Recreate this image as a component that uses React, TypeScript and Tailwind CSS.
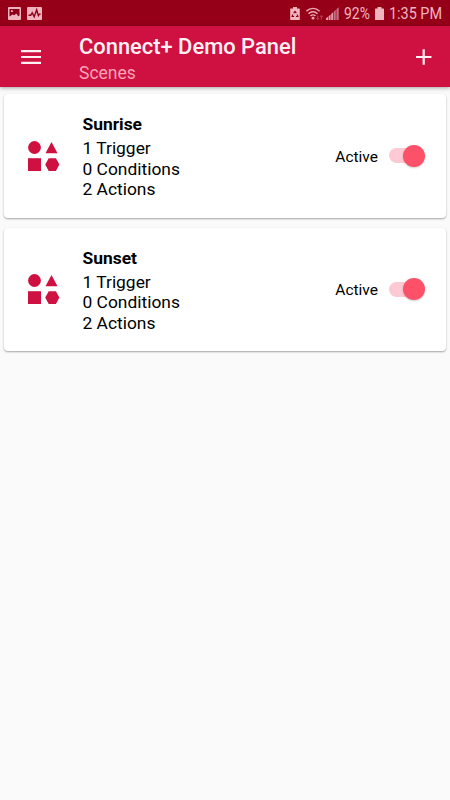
import React, { useState } from 'react';

interface Scene {
  name: string;
  triggers: string;
  conditions: string;
  actions: string;
}

const SCENES: Scene[] = [
  { name: 'Sunrise', triggers: '1 Trigger', conditions: '0 Conditions', actions: '2 Actions' },
  { name: 'Sunset', triggers: '1 Trigger', conditions: '0 Conditions', actions: '2 Actions' },
];

const PictureIcon = () => (
  <svg className="w-[13px] h-[13px]" viewBox="0 0 13 13">
    <rect width="13" height="13" rx="1" fill="#f0b4bf" />
    <path d="M1.5 2h10v6.600l-1.300.6-1.800-2.600-2.200 1.600-1.600-.8-3.100 2z" fill="#8d0018" />
    <path d="M3 3.300h1.800V5H3z" fill="#f0b4bf" />
  </svg>
);

const ActivityIcon = () => (
  <svg className="w-[15px] h-[13px]" viewBox="0 0 15 13">
    <rect width="15" height="13" rx="1" fill="#f0b4bf" />
    <path d="M1.500 8.300h2.200l1.500-2.500 2 4 2.500-7 1.700 5.800 1-1.500h1.300" fill="none" stroke="#8d0018" strokeWidth="1.400" />
  </svg>
);

const SaverIcon = () => (
  <svg className="w-[10px] h-[13px]" viewBox="0 0 10 13">
    <path d="M3 0h4v1.500h2.200a.6.6 0 0 1 .6.6v10.300a.6.6 0 0 1-.6.6H.8a.6.6 0 0 1-.6-.6V2.100a.6.6 0 0 1 .6-.6H3z" fill="#f0b4bf" />
    <path d="M3.700 6.200 5 4.400l1.300 1.800M7.200 7.600l.7 1.900H6M4.200 9.500H2.100l.8-1.900" fill="none" stroke="#8d0018" strokeWidth="1.200" />
  </svg>
);

const WifiIcon = () => (
  <svg className="w-[18px] h-[14px]" viewBox="0 0 18 14">
    <g fill="none" stroke="#eba9b6" strokeWidth="1.400">
      <path d="M.4 4.200a9.200 9.200 0 0 1 13.200 0" />
      <path d="M2.500 6.700a6.200 6.200 0 0 1 9 0" />
      <path d="M4.500 9a3.400 3.400 0 0 1 5 0" />
    </g>
    <circle cx="7" cy="11.200" r="1.400" fill="#eba9b6" />
    <path d="M11.800 8.500v4M10.300 11l1.500 1.500 1.500-1.500M15.300 12.500v-4M13.800 10l1.500-1.500 1.500 1.500" fill="none" stroke="#b54257" strokeWidth="1" />
  </svg>
);

const SignalIcon = () => (
  <svg className="w-[13px] h-[13px]" viewBox="0 0 13 13">
    <path d="M0 11.200l2-1.400V13H0zM2.600 9.200l2-1.700V13h-2zM5.200 6.900l2-1.700V13h-2z" fill="#e59dab" />
    <path d="M7.800 4.600l2-1.700V13h-2zM10.400 2.300l2.300-2V13h-2.300z" fill="#c66c80" />
  </svg>
);

const BatteryIcon = () => (
  <svg className="w-[9px] h-[13px]" viewBox="0 0 9 13">
    <path d="M2.500 0h4v1.500H8.400a.6.6 0 0 1 .6.6v10.300a.6.6 0 0 1-.6.6H.6a.6.6 0 0 1-.6-.6V2.100a.6.6 0 0 1 .6-.6h1.900z" fill="#f0b4bf" />
  </svg>
);

const ShapesIcon = () => (
  <svg className="w-8 h-[30px]" viewBox="0 0 32 30" fill="#ce1141">
    <circle cx="6.500" cy="6.500" r="6.400" />
    <path d="M23.500 1l6 11.200h-12z" />
    <path d="M0 17.200h13V30H0z" />
    <path d="M20.700 17.200h7.200l3.500 6.400-3.500 6.400h-7.200l-3.500-6.400z" />
  </svg>
);

const StatusBar = () => (
  <div className="flex h-[26px] items-center bg-[#950018] pl-2 pr-[9px] pt-px text-[#f0b4bf]">
    <PictureIcon />
    <div className="w-1.5" />
    <ActivityIcon />
    <div className="ml-auto flex items-center">
      <SaverIcon />
      <div className="w-1.5" />
      <WifiIcon />
      <div className="w-0.5" />
      <SignalIcon />
      <span className="ml-[5px] w-[26px] origin-left scale-x-[0.87] whitespace-nowrap text-[16px]">92%</span>
      <div className="w-[5px]" />
      <BatteryIcon />
      <span className="ml-[5px] w-[52px] origin-left scale-x-[0.9] whitespace-nowrap text-[16px]">1:35 PM</span>
    </div>
  </div>
);

const Header = () => (
  <header className="relative flex h-[61px] items-center bg-[#ce1141] pl-[21px] pr-[18px] shadow-[0_1px_4px_rgba(0,0,0,0.35)]">
    <button aria-label="Menu">
      <svg className="w-5 h-[14px]" viewBox="0 0 20 14" fill="#fff0f4">
        <path d="M0 0h20v2.200H0zM0 5.900h20v2.200H0zM0 11.800h20V14H0z" />
      </svg>
    </button>
    <div className="ml-[38px] flex-1 pt-[5px]">
      <h1 className="text-[21.900px] font-medium leading-[28px] text-[#fff0f4]">Connect+ Demo Panel</h1>
      <p className="text-[17.500px] leading-[25px] text-[#f7a3b8]">Scenes</p>
    </div>
    <button aria-label="Add scene">
      <svg className="w-4 h-4" viewBox="0 0 16 16" fill="#fff0f4">
        <path d="M6.600.300h2.200v6.600h6.700v2.200H8.800v6.600H6.600V9.100H0V6.900h6.600z" />
      </svg>
    </button>
  </header>
);

const Toggle = ({ checked, onChange }: { checked: boolean; onChange: () => void }) => (
  <button role="switch" aria-checked={checked} onClick={onChange} className="flex h-[22px] w-9 items-center">
    <span className="flex h-[15px] w-[34px] items-center rounded-full bg-[#fdc9d2]">
      <span
        className={`h-[22px] w-[22px] shrink-0 rounded-full bg-[#fd5169] shadow-[0_1px_2px_rgba(0,0,0,0.2)] ${
          checked ? 'ml-[14px]' : 'ml-0'
        }`}
      />
    </span>
  </button>
);

const SceneCard: React.FC<{ scene: Scene }> = ({ scene }) => {
  const [active, setActive] = useState(true);

  return (
    <div className="flex h-[123.500px] items-center rounded-[4px] bg-white pl-6 pr-[21px] text-black shadow-[0_1px_2px_rgba(0,0,0,0.35)]">
      <ShapesIcon />
      <div className="ml-[22.500px] flex-1 pt-[3px] text-[17.400px] leading-[20.700px]">
        <h2 className="mb-[3px] font-bold">{scene.name}</h2>
        <p>{scene.triggers}</p>
        <p>{scene.conditions}</p>
        <p>{scene.actions}</p>
      </div>
      <span className="mr-[11px] pt-[3px] text-[15.500px]">Active</span>
      <Toggle checked={active} onChange={() => setActive(!active)} />
    </div>
  );
};

export default function App() {
  return (
    <div className="min-h-screen bg-[#fafafa] font-['Roboto',sans-serif]">
      <StatusBar />
      <Header />
      <main className="flex flex-col gap-[10px] px-1 pt-[7px]">
        {SCENES.map(scene => (
          <SceneCard key={scene.name} scene={scene} />
        ))}
      </main>
    </div>
  );
}
